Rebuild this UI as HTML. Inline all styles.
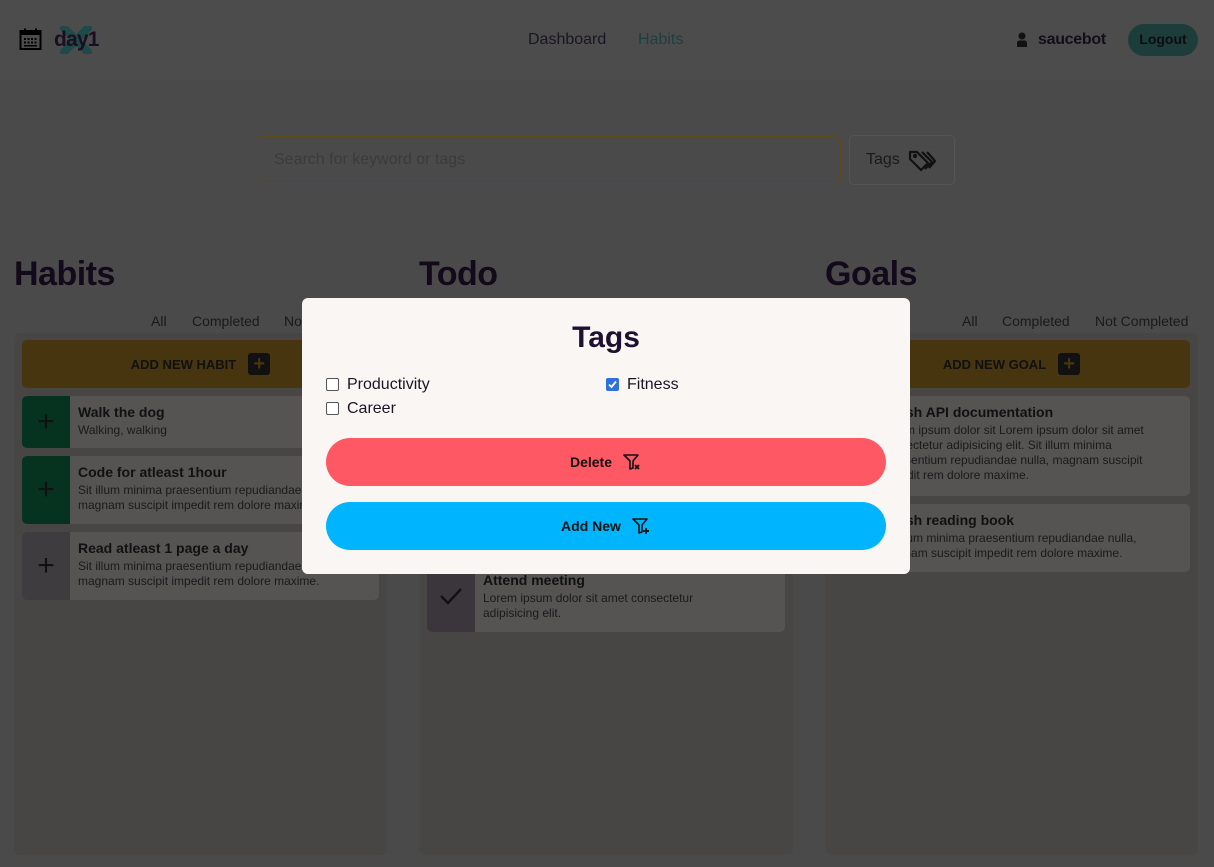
<!DOCTYPE html>
<html><head><meta charset="utf-8">
<style>
*{box-sizing:border-box;margin:0;padding:0}
body{width:1214px;height:867px;overflow:hidden;background:#4a4a4a;font-family:"Liberation Sans",sans-serif;position:relative;color:#111}
.a{position:absolute}
.h{font-size:34px;font-weight:bold;color:#120a1a;letter-spacing:-0.5px}
.flt{font-size:14px;color:#1a1a1a;white-space:nowrap}
.panel{background:#474644;border-radius:6px}
.add{background:#46350f;border-radius:5px;display:flex;align-items:center;justify-content:center;font-size:13px;font-weight:bold;color:#111;gap:12px}
.plusb{width:22px;height:22px;background:#111;border-radius:3px;color:#46350f;font-size:20px;line-height:22px;text-align:center;font-weight:bold}
.card{background:#555453;border-radius:5px;overflow:hidden;display:flex}
.sq{width:48px;flex:none;display:flex;align-items:center;justify-content:center;font-size:30px;color:#111}
.ct{padding:9px 8px;font-size:12px;line-height:15px;color:#1a1a1a}
.ct b{font-size:14px;display:block;margin-bottom:3px;color:#111}
.modal{left:302px;top:298px;width:608px;height:276px;background:#faf6f3;border-radius:6px}
.cb{position:absolute;width:13px;height:13px;border:1px solid #555;border-radius:2px;background:#fff}
.lbl{position:absolute;font-size:16px;color:#1e1428}
.btn{position:absolute;left:24px;width:560px;height:48px;border-radius:24px;display:flex;align-items:center;justify-content:center;font-size:14px;font-weight:bold;color:#111;gap:10px}
</style></head><body>
<div class="a" style="left:0;top:0;width:1214px;height:80px;background:#4c4c4c"></div>
<svg class="a" style="left:19px;top:28px" width="23" height="23" viewBox="0 0 23 23"><rect x="1.5" y="3" width="20" height="18" fill="none" stroke="#000" stroke-width="2"/><rect x="1.5" y="3" width="20" height="4" fill="#000"/><rect x="5" y="0.5" width="2" height="4" fill="#000"/><rect x="16" y="0.5" width="2" height="4" fill="#000"/><g fill="#000"><rect x="5" y="10" width="2" height="2"/><rect x="8.5" y="10" width="2" height="2"/><rect x="12" y="10" width="2" height="2"/><rect x="15.5" y="10" width="2" height="2"/><rect x="5" y="13.5" width="2" height="2"/><rect x="8.5" y="13.5" width="2" height="2"/><rect x="12" y="13.5" width="2" height="2"/><rect x="15.5" y="13.5" width="2" height="2"/><rect x="5" y="17" width="13" height="1.5"/></g></svg>
<svg class="a" style="left:60px;top:26px" width="32" height="28" viewBox="0 0 32 28"><path d="M4 2 L28 26 M28 2 L4 26" stroke="#1e4a47" stroke-width="8" stroke-linecap="round"/></svg>
<div class="a" style="left:54px;top:28px;font-size:21px;font-weight:bold;color:#1a0f22;letter-spacing:-0.8px">day1</div>
<div class="a" style="left:528px;top:31px;font-size:16px;color:#1a1520">Dashboard</div>
<div class="a" style="left:638px;top:31px;font-size:16px;color:#1e3f3f">Habits</div>
<svg class="a" style="left:1016px;top:32px" width="12" height="15" viewBox="0 0 12 15"><circle cx="6" cy="4" r="3.5" fill="#111"/><path d="M1 15 V11 Q1 8.5 4 8.5 H8 Q11 8.5 11 11 V15Z" fill="#111"/></svg>
<div class="a" style="left:1038px;top:31px;font-size:16px;font-weight:bold;color:#140e1a;letter-spacing:-0.3px">saucebot</div>
<div class="a" style="left:1128px;top:24px;width:70px;height:32px;border-radius:16px;background:#1d3d3b;font-size:14px;font-weight:bold;color:#0d0d12;text-align:center;line-height:31px">Logout</div>
<div class="a" style="left:257px;top:136px;width:584px;height:48px;border:1px solid #5e4a1c;border-radius:5px;font-size:16px;color:#3b3b3d;padding:14px 16px">Search for keyword or tags</div>
<div class="a" style="left:849px;top:135px;width:106px;height:50px;border:1px solid #555;border-radius:5px"></div>
<div class="a" style="left:866px;top:151px;font-size:16px;color:#1a1a1a">Tags</div>
<svg class="a" style="left:908px;top:149px" width="29" height="24" viewBox="0 0 29 24" fill="none" stroke="#111" stroke-width="2.2" stroke-linejoin="round"><path d="M2 3 V10 L13 21 L20 14 L9 3 Z"/><circle cx="7" cy="7" r="1" fill="#111"/><path d="M14 3 L24 13 L17 20"/><path d="M19 3 L27 12 L21 19"/></svg>
<div class="a h" style="left:14px;top:255px">Habits</div>
<div class="a h" style="left:419px;top:255px">Todo</div>
<div class="a h" style="left:825px;top:255px">Goals</div>
<div class="a flt" style="left:151px;top:313px">All</div>
<div class="a flt" style="left:192px;top:313px">Completed</div>
<div class="a flt" style="left:284px;top:313px">Not Completed</div>
<div class="a flt" style="left:962px;top:313px">All</div>
<div class="a flt" style="left:1002px;top:313px">Completed</div>
<div class="a flt" style="left:1095px;top:313px">Not Completed</div>
<div class="a panel" style="left:14px;top:333px;width:373px;height:522px"></div>
<div class="a panel" style="left:419px;top:333px;width:374px;height:522px"></div>
<div class="a panel" style="left:825px;top:333px;width:373px;height:522px"></div>
<div class="a add" style="left:22px;top:340px;width:357px;height:48px">ADD NEW HABIT <span class="plusb">+</span></div>
<div class="a card" style="left:22px;top:396px;width:357px;height:52px"><div class="sq" style="background:#06331f">+</div><div class="ct"><b>Walk the dog</b>Walking, walking</div></div>
<div class="a card" style="left:22px;top:456px;width:357px;height:68px"><div class="sq" style="background:#06331f">+</div><div class="ct"><b>Code for atleast 1hour</b>Sit illum minima praesentium repudiandae nulla, magnam suscipit impedit rem dolore maxime.</div></div>
<div class="a card" style="left:22px;top:532px;width:357px;height:68px"><div class="sq" style="background:#3f3c40">+</div><div class="ct"><b>Read atleast 1 page a day</b>Sit illum minima praesentium repudiandae nulla, magnam suscipit impedit rem dolore maxime.</div></div>
<div class="a card" style="left:427px;top:560px;width:358px;height:72px"><div class="sq" style="background:#3a363b"><svg width="24" height="18" viewBox="0 0 24 18"><path d="M2 9 L9 16 L22 2" stroke="#111" stroke-width="2.4" fill="none"/></svg></div><div class="ct" style="padding-top:13px;padding-right:40px"><b>Attend meeting</b>Lorem ipsum dolor sit amet consectetur adipisicing elit.</div></div>
<div class="a add" style="left:833px;top:340px;width:357px;height:48px">ADD NEW GOAL <span class="plusb">+</span></div>
<div class="a card" style="left:833px;top:396px;width:357px;height:100px"><div class="ct" style="padding-left:48px;padding-right:28px"><b>Finish API documentation</b>Lorem ipsum dolor sit Lorem ipsum dolor sit amet consectetur adipisicing elit. Sit illum minima praesentium repudiandae nulla, magnam suscipit impedit rem dolore maxime.</div></div>
<div class="a card" style="left:833px;top:504px;width:357px;height:68px"><div class="ct" style="padding-left:48px;padding-right:28px"><b>Finish reading book</b>Sit illum minima praesentium repudiandae nulla, magnam suscipit impedit rem dolore maxime.</div></div>
<div class="a modal">
 <div style="position:absolute;left:0;width:608px;top:23px;text-align:center;font-size:30px;font-weight:bold;color:#1e1030">Tags</div>
 <div class="cb" style="left:24px;top:80px"></div><div class="lbl" style="left:45px;top:78px">Productivity</div>
 <div class="cb" style="left:24px;top:104px"></div><div class="lbl" style="left:45px;top:102px">Career</div>
 <div class="cb" style="left:304px;top:80px;background:#2f6fe0;border-color:#2f6fe0"><svg width="11" height="11" viewBox="0 0 11 11" style="position:absolute;left:0;top:0"><path d="M2 5.5 L4.5 8 L9 2.5" stroke="#fff" stroke-width="1.8" fill="none"/></svg></div><div class="lbl" style="left:325px;top:78px">Fitness</div>
 <div class="btn" style="top:140px;background:#ff5865">Delete <svg width="20" height="20" viewBox="0 0 20 20" fill="none" stroke="#111" stroke-width="1.6" stroke-linejoin="round"><path d="M2 3 H16 L11 9 V16 L8 17 V9 Z"/><path d="M13 13 L17 17 M17 13 L13 17" stroke-width="1.8"/></svg></div>
 <div class="btn" style="top:204px;background:#00b5fd">Add New <svg width="20" height="20" viewBox="0 0 20 20" fill="none" stroke="#111" stroke-width="1.6" stroke-linejoin="round"><path d="M2 3 H16 L11 9 V16 L8 17 V9 Z"/><path d="M15 12 V18 M12 15 H18" stroke-width="1.8"/></svg></div>
</div>
</body></html>
